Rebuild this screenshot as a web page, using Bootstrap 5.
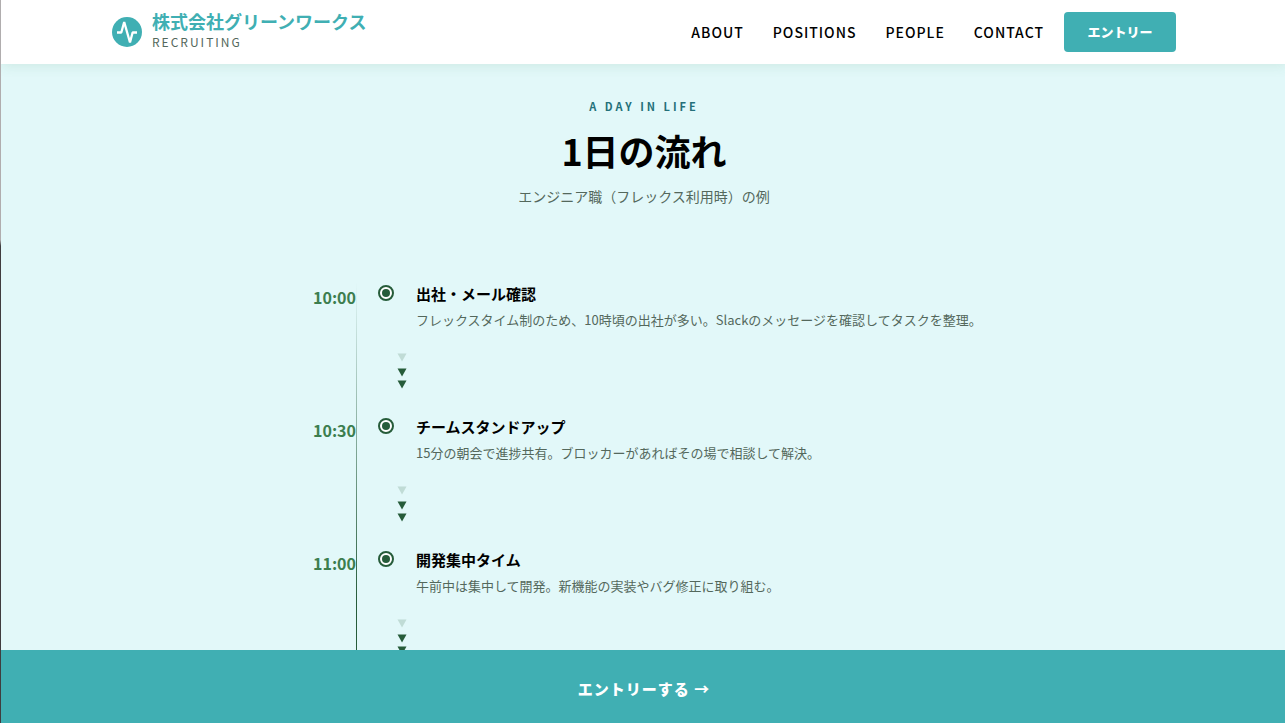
<!DOCTYPE html>
<html lang="ja">
<head>
<meta charset="utf-8">
<meta name="viewport" content="width=device-width, initial-scale=1">
<title>株式会社グリーンワークス RECRUITING</title>
<link href="https://cdn.jsdelivr.net/npm/bootstrap@5.3.0/dist/css/bootstrap.min.css" rel="stylesheet">
<style>
  :root { --teal: #40afb3; --mist: #e2f8f9; --forest: #265c3a; --moss: #54685c; }
  html { overflow: hidden; }
  body { font-family: "Noto Sans CJK JP", sans-serif; background: var(--mist); color: #000; height: 100vh; overflow: hidden; }
  .window-edge { width: 1px; background: linear-gradient(#b0adae 0 240px, #403d3f 246px); }
  .page { margin-right: -2px; }
  .site-head { height: 64px; background: #fff; box-shadow: 0 2px 12px rgba(60, 130, 70, .12); z-index: 2; }
  .head-inner { max-width: 1064px; }
  .brand { color: var(--teal); gap: 10px; }
  .brand-text { padding-bottom: 2px; }
  .brand-name { font-size: 18px; line-height: 22px; }
  .brand-sub { font-size: 12px; line-height: 20px; letter-spacing: 2px; color: var(--moss); }
  .menu { gap: 29px; }
  .menu a { font-size: 14px; line-height: 24px; letter-spacing: 1px; font-weight: 500; color: #000; text-decoration: none; padding-bottom: 1px; }
  .btn-entry { background: var(--teal); color: #fff; font-size: 13px; line-height: 20px; font-weight: 900; width: 112px; height: 40px; border: 0; border-radius: 4px; margin-left: 20px; padding: 0; }
  .btn-entry:hover, .btn-entry:focus { background: #36999d; color: #fff; }
  .eyebrow { font-size: 11px; line-height: 20px; letter-spacing: 3px; color: #24707a; margin-top: 32px; }
  .headline { font-size: 36px; line-height: 54px; margin-top: 7px; }
  .lede { font-size: 14px; line-height: 24px; color: var(--moss); margin-top: 7px; }
  .timeline { width: 100%; max-width: 702px; margin-top: 74px; }
  .step { height: 133px; }
  .step-time { width: 63px; font-size: 16px; line-height: 24px; color: #3c7e4f; padding-top: 3px; }
  .rail { width: 1px; background: linear-gradient(rgba(38, 92, 58, 0), var(--forest) 320px); z-index: 1; left: 63px; top: 0; bottom: 0; }
  .step-dot { width: 16px; height: 16px; margin: 3px 22px 0 22px; }
  .step-title { font-size: 15px; line-height: 24px; }
  .step-text { font-size: 13px; line-height: 24px; color: var(--moss); margin-top: 2px; }
  .arrows { width: 10px; height: 36px; margin: 21px 0 0 -19px; }
  .bottom-cta { height: 73px; background: var(--teal); color: #fff; font-size: 15px; font-weight: 900; line-height: 24px; letter-spacing: 1px; padding-top: 5px; z-index: 2; }
</style>
</head>
<body class="d-flex">
<svg class="d-none" aria-hidden="true">
  <symbol id="dot" viewBox="0 0 16 16"><circle cx="8" cy="8" r="7" fill="#fff" stroke="#265c3a" stroke-width="2"/><circle cx="8" cy="8" r="4" fill="#265c3a"/></symbol>
  <symbol id="down" viewBox="0 0 10 36"><g fill="#265c3a"><path d="M.5 .5h9L5 8.500z" opacity=".18"/><path d="M.5 15.500h9L5 23.500z"/><path d="M.5 27.500h9L5 35.500z"/></g></symbol>
</svg>
<div class="window-edge flex-shrink-0"></div>
<div class="page d-flex flex-column flex-grow-1 overflow-hidden">
  <header class="site-head flex-shrink-0 position-relative">
    <div class="head-inner mx-auto h-100 d-flex align-items-center justify-content-between">
      <a href="#" class="brand d-flex align-items-center text-decoration-none">
        <svg width="30" height="30" viewBox="0 0 30 30" aria-hidden="true"><circle cx="15" cy="15" r="15" fill="#40afb3"/><path d="M5 15.500h4.300L12.200 5L18 25.500L20.600 15.500H25" fill="none" stroke="#fff" stroke-width="2.300" stroke-linejoin="bevel"/></svg>
        <span class="brand-text d-flex flex-column">
          <span class="brand-name fw-bold">株式会社グリーンワークス</span>
          <span class="brand-sub">RECRUITING</span>
        </span>
      </a>
      <nav class="menu d-flex align-items-center">
        <a href="#about">ABOUT</a>
        <a href="#positions">POSITIONS</a>
        <a href="#people">PEOPLE</a>
        <div class="d-flex align-items-center"><a href="#contact">CONTACT</a><button type="button" class="btn btn-entry">エントリー</button></div>
      </nav>
    </div>
  </header>
  <main class="flex-grow-1 overflow-hidden d-flex flex-column align-items-center">
    <p class="eyebrow fw-bold mb-0">A DAY IN LIFE</p>
    <h1 class="headline fw-bold mb-0">1日の流れ</h1>
    <p class="lede mb-0">エンジニア職（フレックス利用時）の例</p>
    <div class="timeline position-relative">
      <div class="rail position-absolute"></div>
      <div class="step d-flex align-items-start">
        <time class="step-time fw-bold text-end flex-shrink-0">10:00</time>
        <svg class="step-dot flex-shrink-0"><use href="#dot"/></svg>
        <div><h2 class="step-title fw-bold mb-0">出社・メール確認</h2><p class="step-text mb-0">フレックスタイム制のため、10時頃の出社が多い。Slackのメッセージを確認してタスクを整理。</p><svg class="arrows d-block"><use href="#down"/></svg></div>
      </div>
      <div class="step d-flex align-items-start">
        <time class="step-time fw-bold text-end flex-shrink-0">10:30</time>
        <svg class="step-dot flex-shrink-0"><use href="#dot"/></svg>
        <div><h2 class="step-title fw-bold mb-0">チームスタンドアップ</h2><p class="step-text mb-0">15分の朝会で進捗共有。ブロッカーがあればその場で相談して解決。</p><svg class="arrows d-block"><use href="#down"/></svg></div>
      </div>
      <div class="step d-flex align-items-start">
        <time class="step-time fw-bold text-end flex-shrink-0">11:00</time>
        <svg class="step-dot flex-shrink-0"><use href="#dot"/></svg>
        <div><h2 class="step-title fw-bold mb-0">開発集中タイム</h2><p class="step-text mb-0">午前中は集中して開発。新機能の実装やバグ修正に取り組む。</p><svg class="arrows d-block"><use href="#down"/></svg></div>
      </div>
    </div>
  </main>
  <a href="#entry" class="bottom-cta flex-shrink-0 d-flex align-items-center justify-content-center text-decoration-none">エントリーする →</a>
</div>
<script src="https://cdn.jsdelivr.net/npm/bootstrap@5.3.0/dist/js/bootstrap.bundle.min.js"></script>
</body>
</html>
